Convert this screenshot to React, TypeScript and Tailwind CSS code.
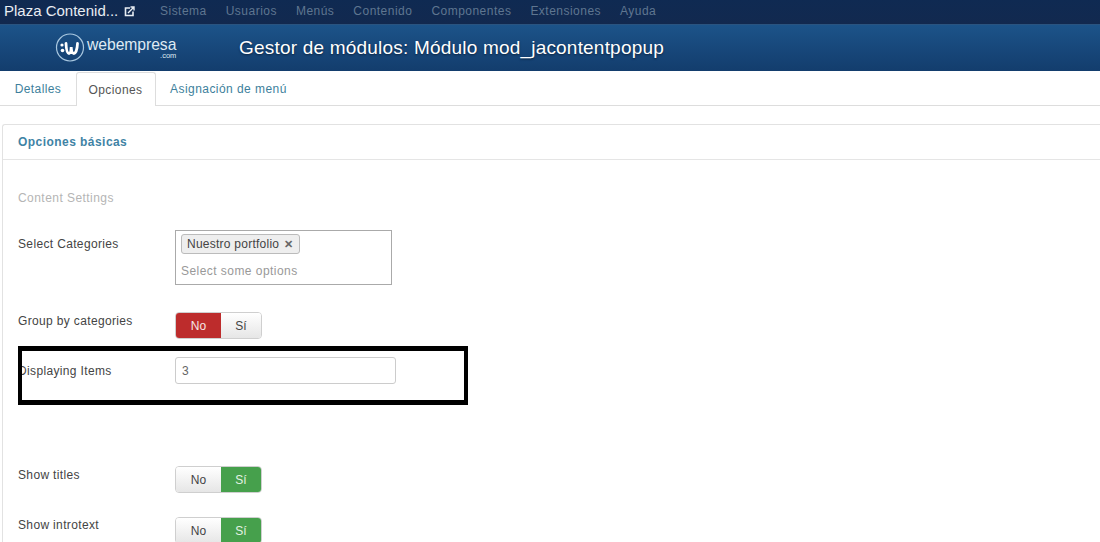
const menu = ["Sistema", "Usuarios", "Menús", "Contenido", "Componentes", "Extensiones", "Ayuda"];

function Logo() {
  return (
    <div className="flex items-center gap-[2px]">
      <svg width="30" height="30" viewBox="0 0 30 30" fill="none">
        <circle cx="15" cy="14.500" r="13.500" stroke="#a9c8e0" strokeWidth="1.200" />
        <circle cx="7" cy="12" r="1.600" fill="#fff" />
        <circle cx="7.500" cy="17.500" r="1.800" fill="#fff" />
        <path d="M11 10.500c.3 6.500 1.300 10 3 10s2-3.500 2.200-6.500c.2 3 .8 6.500 2.700 6.500s3.300-4 3.600-10" stroke="#fff" strokeWidth="2.800" strokeLinecap="round" />
      </svg>
      <div className="flex flex-col items-end text-[#dfeaf3]">
        <span className="text-[15.700px] leading-[16px] tracking-[-0.05px]">webempresa</span>
        <span className="-mt-[1px] text-[7.500px] leading-[8px]">.com</span>
      </div>
    </div>
  );
}

function Toggle({ value }: { value: "no" | "si" }) {
  return (
    <div className="flex h-[27px] w-[87px] overflow-hidden rounded-[4px] border border-[#cfcfcf] text-[12px]">
      <div className={value === "no" ? "flex w-[45px] items-center justify-center bg-[#bd2c2c] text-[#f5e6e6]" : "flex w-[45px] items-center justify-center bg-gradient-to-b from-white to-[#e6e6e6] text-[#444]"}>
        No
      </div>
      <div className={value === "si" ? "flex flex-1 items-center justify-center bg-[#46a04c] text-[#e4f2e4]" : "flex flex-1 items-center justify-center bg-gradient-to-b from-white to-[#e6e6e6] text-[#444]"}>
        Sí
      </div>
    </div>
  );
}

function Row({ label, className, children }: { label: string; className: string; children: React.ReactNode }) {
  return (
    <div className={`flex items-start ${className}`}>
      <div className="w-[157px] shrink-0 text-[12px] leading-[16px] tracking-[0.35px] text-[#444]">{label}</div>
      {children}
    </div>
  );
}

export default function App() {
  return (
    <div className="relative h-[542px] w-[1100px] overflow-hidden bg-white font-['Liberation_Sans',Arial,sans-serif]">
      <div className="flex h-[25px] items-center border-b border-[#2a5480] bg-gradient-to-b from-[#0f2a52] to-[#12294f] pb-[2px]">
        <div className="ml-[4px] flex w-[156px] items-center gap-[6px] text-[15px] text-[#e8edf3]">
          Plaza Contenid...
          <svg width="11" height="11" viewBox="0 0 11 11" fill="none" stroke="#e8edf3" strokeWidth="1.600">
            <path d="M6 2H1.500v7.500H9V5.500" />
            <path d="M4 7l5.500-5.500M6.500 1h3.500v3.500" strokeWidth="1.400" />
          </svg>
        </div>
        <div className="flex gap-[19px] text-[12px] tracking-[0.48px] text-[#5f7690]">
          {menu.map((m) => (
            <span key={m}>{m}</span>
          ))}
        </div>
      </div>

      <div className="flex h-[46px] items-center bg-gradient-to-b from-[#1c5389] to-[#133d6d]">
        <div className="ml-[55px] w-[184px]">
          <Logo />
        </div>
        <h1 className="text-[19px] tracking-[0.2px] text-white [text-shadow:0_1px_2px_#0b2440]">
          Gestor de módulos: Módulo mod_jacontentpopup
        </h1>
      </div>

      <div className="flex h-[35px] items-stretch border-b border-[#dddddd] pt-[1px] text-[12px] tracking-[0.4px]">
        <div className="flex w-[76px] items-center justify-center text-[#3d7f9c]">Detalles</div>
        <div className="-mb-[1px] flex w-[80px] items-center justify-center rounded-t-[3px] border-x border-t border-[#dddddd] bg-white pr-[1px] text-[#555]">Opciones</div>
        <div className="ml-[14px] flex items-center tracking-[0.45px] text-[#3d7f9c]">Asignación de menú</div>
      </div>

      <div className="ml-[2px] mt-[18px] rounded-tl-[3px] border-l border-t border-[#e2e2e2]">
        <div className="flex h-[35px] items-center border-b border-[#e5e5e5] pl-[15px] text-[12px] font-bold tracking-[0.45px] text-[#3f83a5]">
          Opciones básicas
        </div>
        <div className="pl-[15px]">
          <div className="mt-[30px] text-[12px] leading-[16px] tracking-[0.45px] text-[#b5b5b5]">Content Settings</div>

          <Row label="Select Categories" className="mt-[30px]">
            <div className="-mt-[6px] h-[55px] w-[217px] border border-[#aaaaaa] pl-[5px] pt-[3px]">
              <div className="flex h-[20px] w-[119px] items-center gap-[5px] rounded-[3px] border border-[#bbbbbb] bg-[#eeeeee] pl-[5px] text-[12px] tracking-[0.25px] text-[#444]">
                Nuestro portfolio
                <span className="text-[11px] font-bold leading-none text-[#666]">✕</span>
              </div>
              <div className="mt-[9px] text-[12px] leading-[16px] tracking-[0.45px] text-[#999]">Select some options</div>
            </div>
          </Row>

          <Row label="Group by categories" className="mt-[28px]">
            <div className="-mt-[1px]">
              <Toggle value="no" />
            </div>
          </Row>

          <Row label="Displaying Items" className="mt-[24px]">
            <div className="-mt-[6px] flex h-[27px] w-[221px] items-center rounded-[3px] border border-[#cccccc] pl-[6px] text-[12px] text-[#666]">3</div>
          </Row>

          <Row label="Show titles" className="mt-[83px]">
            <div className="-mt-[1px]">
              <Toggle value="si" />
            </div>
          </Row>

          <Row label="Show introtext" className="mt-[24px]">
            <Toggle value="si" />
          </Row>
        </div>
      </div>

      {/* black marker box drawn over the screenshot */}
      <div className="absolute left-[18px] top-[346px] h-[59px] w-[450px] border-x-[4px] border-y-[5px] border-black" />
    </div>
  );
}
